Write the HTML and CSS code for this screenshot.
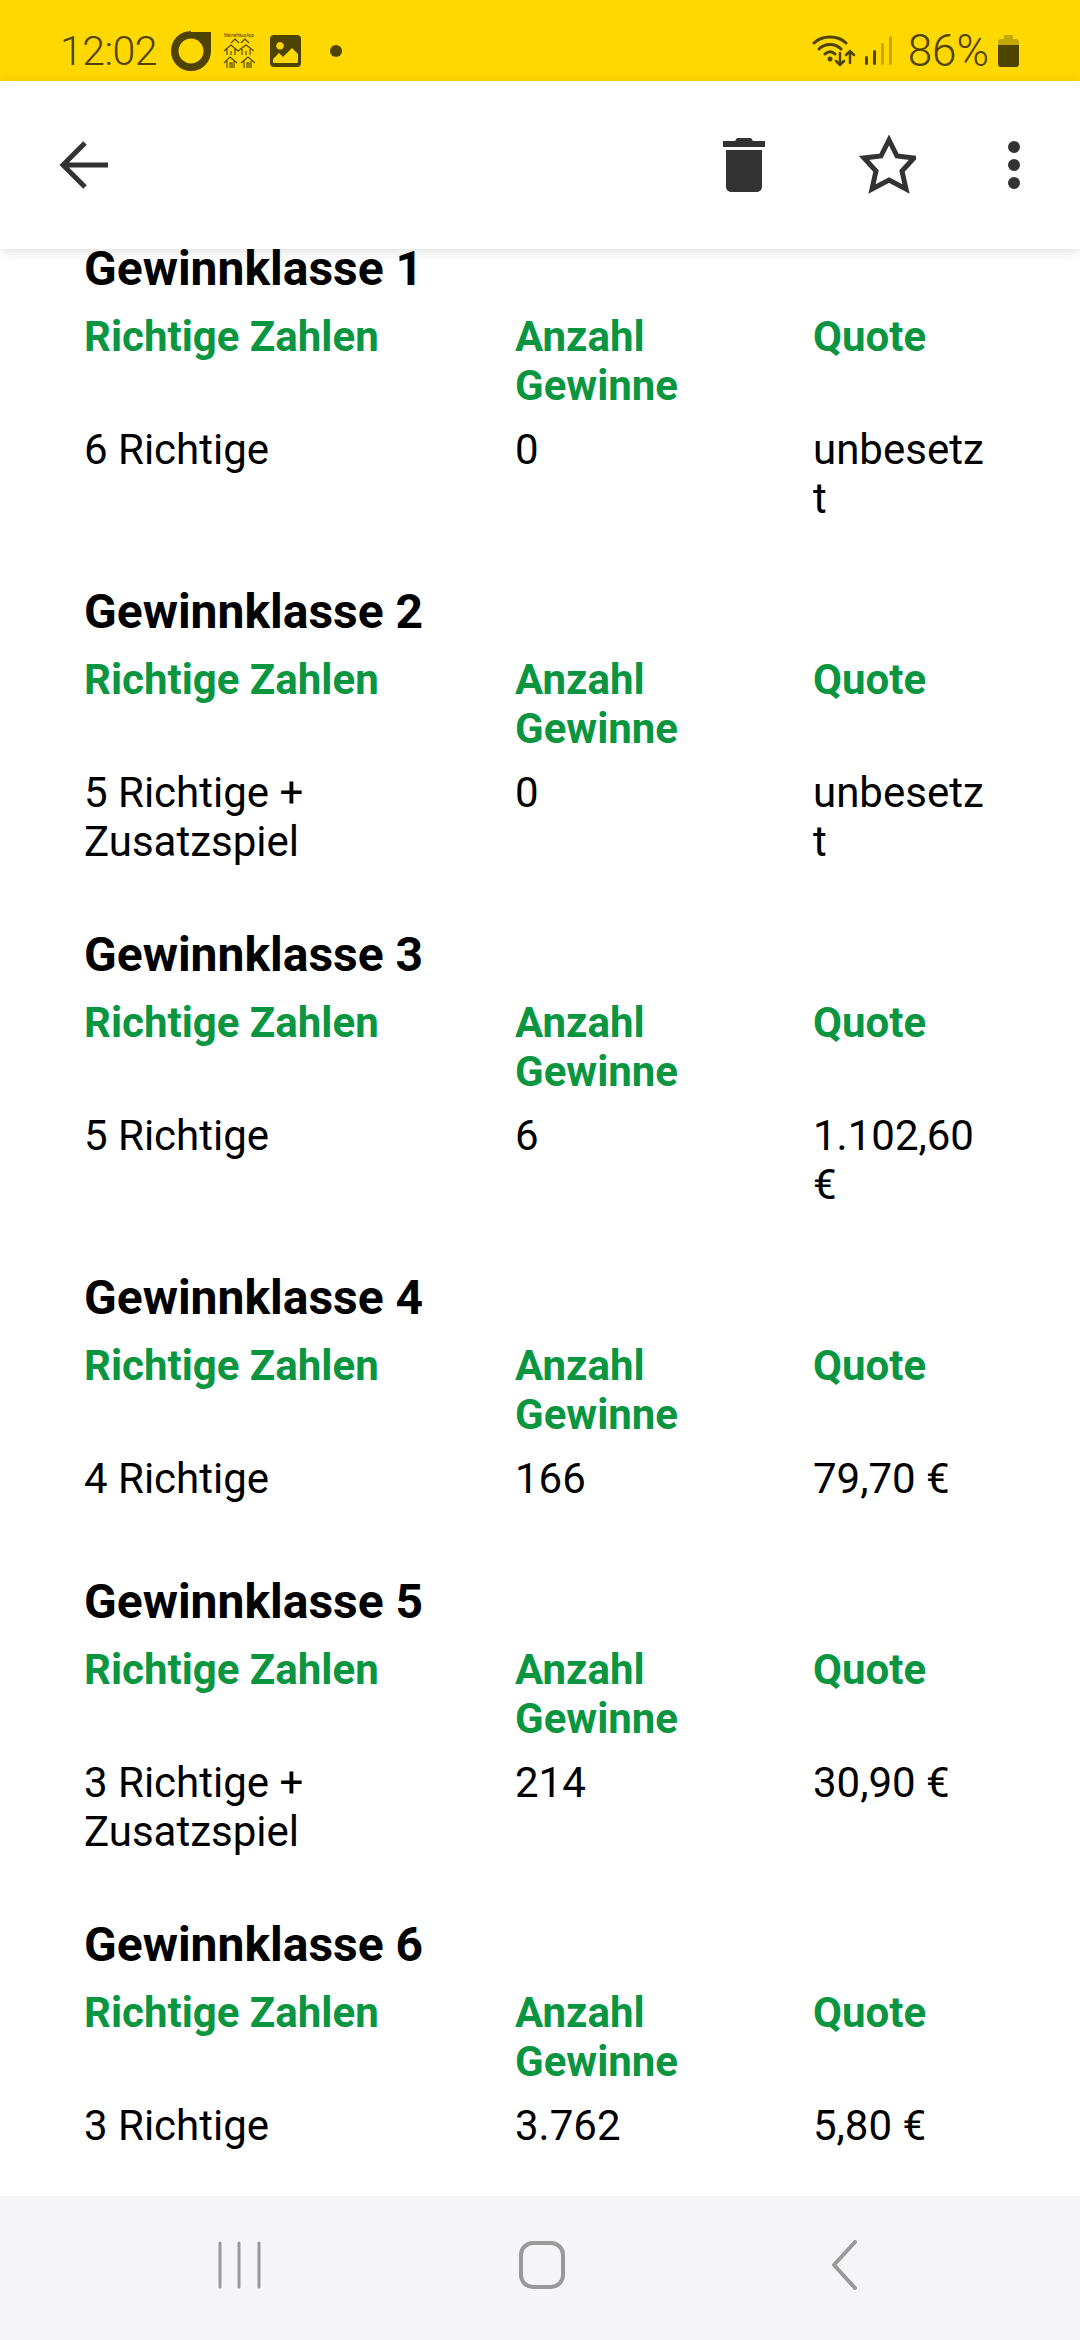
FILE: index.html
```html
<!DOCTYPE html>
<html lang="de">
	<head>
		<meta charset="utf-8">
		<title>Gewinnquoten</title>
		<link rel="stylesheet" href="styles.css">
	</head>
	<body>
		<div class="status">
			<div class="status-left">
				<span class="clock">12:02</span>
				<svg class="ic-drop" width="40" height="40" viewBox="0 0 40 40"><path fill="#4f4300" d="M20 1H40V20A20 20 0 1 1 20 0ZM20 7.500A12.500 12.500 0 1 0 32.500 20A12.500 12.500 0 0 0 20 7.500Z" fill-rule="evenodd"/></svg>
				<svg class="ic-houses" width="32" height="37" viewBox="0 0 32 37">
					<text x="1" y="4" font-size="4.500" font-family="Roboto" fill="#4f4300" textLength="30">MeineHausApp</text>
					<path fill="none" stroke="#4f4300" stroke-width="1.100" d="M8 10l4-4 4 4M18 10l4-4 4 4M1 18l7-6 7 6 8-6 8 6M4 16v6M8 18v4M12 16v6M19 16v6M23 18v4M27 16v6M1 30l6-6 7 6M18 30l7-6 7 6M4 28v7M11 28v7M21 28v7M28 28v7M7 35v-5h2v5M24 35v-5h2v5"/>
				</svg>
				<svg class="ic-image" width="31" height="32" viewBox="0 0 31 32"><path fill="#4f4300" fill-rule="evenodd" d="M4 0H27A4 4 0 0 1 31 4V28A4 4 0 0 1 27 32H4A4 4 0 0 1 0 28V4A4 4 0 0 1 4 0ZM10 7a3.800 3.800 0 1 0 .01 0ZM4 28H27A1 1 0 0 0 28 27V19L22 13L13 22L9 18L3 24V27A1 1 0 0 0 4 28Z"/></svg>
				<span class="dot"></span>
			</div>
			<div class="status-right">
				<svg width="44" height="34" viewBox="0 0 44 34"><g fill="none" stroke="#4f4300" stroke-width="3" stroke-linecap="round"><path d="M2 9C10 1 26 1 34 9M7 15C13 9 23 9 29 15M13 20C16 17 20 17 23 20"/><path stroke-width="2.500" d="M28 19V31M24 27L28 31L32 27M38 29V17M34 21L38 17L42 21"/></g><circle cx="18" cy="25" r="2.500" fill="#4f4300"/></svg>
				<svg width="27" height="30" viewBox="0 0 27 30"><rect x="0" y="20" width="3" height="9" rx="1.500" fill="#4f4300"/><rect x="8" y="14" width="3" height="15" rx="1.500" fill="#4f4300"/><rect x="16" y="7" width="3" height="22" rx="1.500" fill="#c4a800"/><rect x="24" y="0" width="3" height="29" rx="1.500" fill="#c4a800"/></svg>
				<span class="percent">86%</span>
				<svg width="21" height="32" viewBox="0 0 21 32"><path fill="#c4a800" d="M6 0H15V4H18A3 3 0 0 1 21 7V10H0V7A3 3 0 0 1 3 4H6Z"/><path fill="#4f4300" d="M0 10H21V29A3 3 0 0 1 18 32H3A3 3 0 0 1 0 29Z"/></svg>
			</div>
		</div>

		<div class="appbar">
			<svg width="50" height="50" viewBox="0 0 50 50"><path fill="none" stroke="#333" stroke-width="5" d="M49 25H5M26 3L4 25L26 47"/></svg>
			<div class="actions">
				<svg width="42" height="55" viewBox="0 0 42 55"><path fill="#333" d="M0 3H12L14 0H28L30 3H42V9H0ZM3 12H39V49A5 5 0 0 1 34 54H8A5 5 0 0 1 3 49Z"/></svg>
				<svg width="60" height="60" viewBox="-3 0 60 60"><path fill="none" stroke="#333" stroke-width="5" stroke-miterlimit="10" d="M30 5L38 21L55 23L43 36L47 54L30 45L13 54L17 36L5 23L22 21Z"/></svg>
				<svg width="14" height="50" viewBox="0 0 14 50"><circle cx="7" cy="7" r="6" fill="#333"/><circle cx="7" cy="25" r="6" fill="#333"/><circle cx="7" cy="43" r="6" fill="#333"/></svg>
			</div>
		</div>

		<main class="content">
			<section class="klasse">
				<h2>Gewinnklasse 1</h2>
				<div class="grid">
					<b>Richtige Zahlen</b><b>Anzahl Gewinne</b><b>Quote</b>
					<span>6 Richtige</span><span>0</span><span>unbesetzt</span>
				</div>
			</section>
			<section class="klasse">
				<h2>Gewinnklasse 2</h2>
				<div class="grid">
					<b>Richtige Zahlen</b><b>Anzahl Gewinne</b><b>Quote</b>
					<span>5 Richtige + Zusatzspiel</span><span>0</span><span>unbesetzt</span>
				</div>
			</section>
			<section class="klasse">
				<h2>Gewinnklasse 3</h2>
				<div class="grid">
					<b>Richtige Zahlen</b><b>Anzahl Gewinne</b><b>Quote</b>
					<span>5 Richtige</span><span>6</span><span>1.102,60 €</span>
				</div>
			</section>
			<section class="klasse">
				<h2>Gewinnklasse 4</h2>
				<div class="grid">
					<b>Richtige Zahlen</b><b>Anzahl Gewinne</b><b>Quote</b>
					<span>4 Richtige</span><span>166</span><span>79,70 €</span>
				</div>
			</section>
			<section class="klasse">
				<h2>Gewinnklasse 5</h2>
				<div class="grid">
					<b>Richtige Zahlen</b><b>Anzahl Gewinne</b><b>Quote</b>
					<span>3 Richtige + Zusatzspiel</span><span>214</span><span>30,90 €</span>
				</div>
			</section>
			<section class="klasse">
				<h2>Gewinnklasse 6</h2>
				<div class="grid">
					<b>Richtige Zahlen</b><b>Anzahl Gewinne</b><b>Quote</b>
					<span>3 Richtige</span><span>3.762</span><span>5,80 €</span>
				</div>
			</section>
		</main>

		<div class="navbar">
			<svg width="44" height="48" viewBox="0 0 44 48"><path fill="none" stroke="#999" stroke-width="3" stroke-linecap="round" d="M2 2V46M21 2V46M41 2V46"/></svg>
			<svg class="ic-home" width="46" height="48" viewBox="0 0 46 48"><rect x="2" y="2" width="42" height="44" rx="12" fill="none" stroke="#999" stroke-width="4"/></svg>
			<svg width="26" height="50" viewBox="0 0 26 50"><path fill="none" stroke="#999" stroke-width="4" stroke-linecap="round" stroke-linejoin="round" d="M24 2L3 25L24 48"/></svg>
		</div>
	</body>
</html>
```

FILE: styles.css
```css
body{
	margin:0;
	width:1080px;
	height:2340px;
	display:flex;
	flex-direction:column;
	overflow:hidden;
	font-family:Roboto, sans-serif;
	background-color:#FFF;
}
.status{
	height:81px;
	box-sizing:border-box;
	flex:none;
	background-color:#FFD800;
	color:#4F4300;
	display:flex;
	justify-content:space-between;
	align-items:center;
	padding:21px 61px 0 60px;
}
.status-left, .status-right{
	display:flex;
	align-items:center;
}
.clock, .percent{
	font-weight:300;
}
.clock{
	font-size:41px;
	letter-spacing:-0.5px;
}
.percent{
	font-size:44px;
	margin-left:7px;
}
.ic-drop{
	margin-left:14px;
}
.ic-houses{
	margin-left:12px;
}
.ic-image{
	margin-left:15px;
}
.dot{
	width:12px;
	height:12px;
	border-radius:50%;
	background-color:#4F4300;
	margin-left:29px;
}
.status-right{
	gap:9px;
}
.appbar{
	height:168px;
	flex:none;
	box-sizing:border-box;
	position:relative;
	z-index:2;
	background-color:#FFF;
	box-shadow:0 2px 12px rgba(0,0,0,.14);
	display:flex;
	justify-content:space-between;
	align-items:center;
	padding:0 59px 0 59px;
}
.actions{
	display:flex;
	align-items:center;
	gap:91px;
}
.content{
	flex:1;
	min-height:0;
	padding:0 84px;
}
.klasse{
	margin-bottom:69px;
}
h2{
	margin:0;
	font-size:48px;
	line-height:40px;
	font-weight:700;
	color:#000;
}
.grid{
	display:grid;
	grid-template-columns:431px 298px 176px;
	margin-top:23px;
}
.grid b{
	font-size:42px;
	line-height:49px;
	color:#0A9640;
	padding:0 20px 15px 0;
}
.grid span{
	font-size:42px;
	line-height:49px;
	min-height:59px;
	color:#000;
	padding-right:10px;
	overflow-wrap:anywhere;
}
.grid span:nth-of-type(3){
	padding-right:0;
}
.navbar{
	height:144px;
	flex:none;
	box-sizing:border-box;
	position:relative;
	z-index:2;
	background-color:#F5F5F8;
	display:flex;
	justify-content:space-between;
	align-items:center;
	padding:0 223px 6px 218px;
}
.ic-home{
	margin-right:10px;
}
```
